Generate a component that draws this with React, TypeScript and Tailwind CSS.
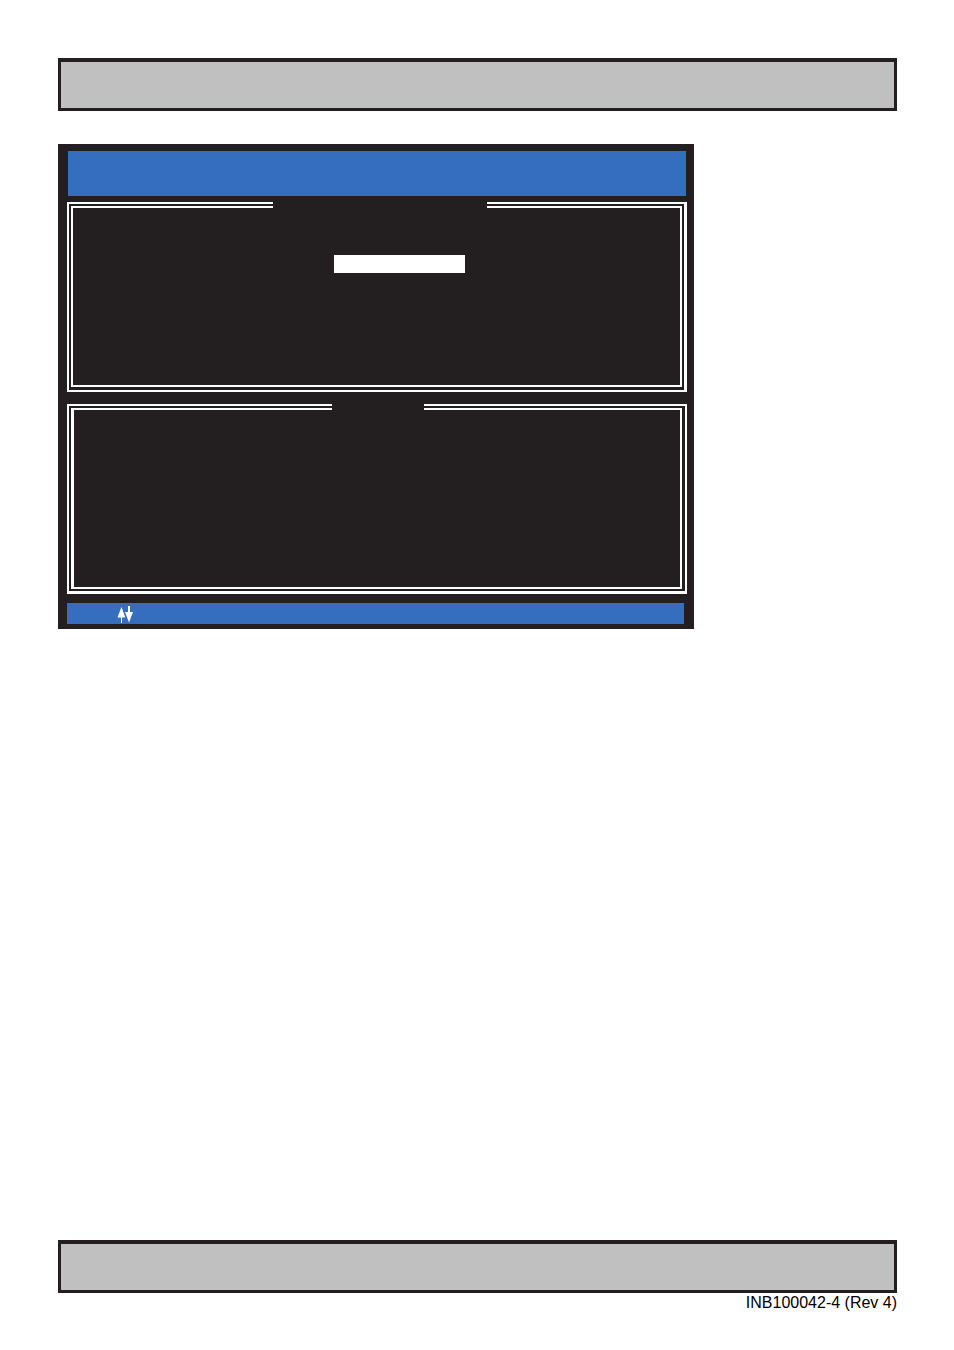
import clsx from "clsx";

function Banner() {
  return <div className="h-[53px] border-[3px] border-t-4 border-[#231f20] bg-[#c0c0c0]" />;
}

// double-line frame, the notch leaves room for a title on the top edge
function DoubleFrame({ outer, inner, notch, children }: {
  outer: string;
  inner: string;
  notch: string;
  children?: React.ReactNode;
}) {
  return (
    <section className={clsx("relative flex h-[190px] border-white", outer)}>
      <div className={clsx("flex-1 border-white", inner)}>{children}</div>
      <div className={clsx("absolute -top-[2px] h-[6px] bg-[#231f20]", notch)} />
    </section>
  );
}

function ArrowKeys() {
  return (
    <svg className="h-[18px] w-4" viewBox="0 0 16 18" fill="#fff" aria-hidden="true">
      <path d="M4.5 2 L8.3 12.5 H5 V18 H4 V12.5 H0.5 Z" />
      <path d="M11 1 H13 V7 H16 L12 17.5 L8 7 H11 Z" />
    </svg>
  );
}

function SetupScreen() {
  return (
    <main className="mt-[33px] flex h-[485px] w-full max-w-[636px] flex-col bg-[#231f20]">
      <header className="mt-[7px] mr-2 ml-[10px] h-[45px] bg-[#356dbf]" />

      <div className="mt-[6px] mr-[7px] ml-[9px] flex flex-col gap-3">
        <DoubleFrame
          outer="border-2 border-r-[3px] p-[2px] pb-[3px]"
          inner="border-2"
          notch="left-[204px] w-[214px]"
        >
          {/* highlighted entry */}
          <div className="mt-[47px] ml-[261px] h-[18px] w-[131px] bg-white" />
        </DoubleFrame>
        <DoubleFrame
          outer="border-2 border-b-[3px] p-[2px] pr-[3px]"
          inner="border-2 border-l-[3px]"
          notch="left-[263px] w-[92px]"
        />
      </div>

      <footer className="mt-[9px] mr-[10px] ml-[9px] flex h-[21px] items-center bg-[#356dbf] pl-[50px]">
        <ArrowKeys />
      </footer>
    </main>
  );
}

export default function App() {
  return (
    <div className="flex min-h-screen flex-col bg-white pt-[58px] pr-[57px] pb-[37px] pl-[58px] font-['Liberation_Sans',Arial,sans-serif]">
      <Banner />
      <SetupScreen />
      <div className="mt-auto">
        <Banner />
        <p className="text-right text-base leading-5 text-black">INB100042-4 (Rev 4)</p>
      </div>
    </div>
  );
}
